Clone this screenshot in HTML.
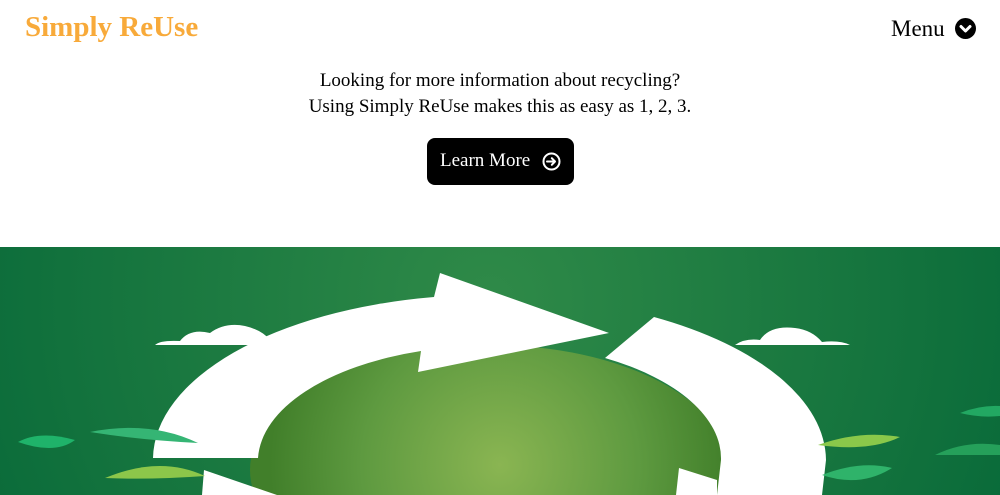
<!DOCTYPE html>
<html><head><style>
html,body{margin:0;width:1000px;height:495px;overflow:hidden}
body{background:#fff;font-family:"Liberation Serif",serif;position:relative}
.logo{position:absolute;left:25px;top:11px;font-size:29px;font-weight:bold;color:#f8aa3a}
.menu{position:absolute;left:891px;top:16px;font-size:23px;color:#000}
.mi{position:absolute;left:955px;top:18px;width:21px;height:21px;border-radius:50%;background:#000}
.txt{position:absolute;left:0;width:1000px;text-align:center;font-size:19px;color:#000}
.btn{position:absolute;left:427px;top:138px;width:147px;height:47px;border-radius:8px;background:#000;color:#fff;font-size:19px}
.btn span{position:absolute;left:13px;top:12px}
svg.hero{position:absolute;left:0;top:247px;display:block}
</style></head><body>
<div class="logo">Simply ReUse</div>
<div class="menu">Menu</div>
<div class="mi"><svg width="21" height="21"><path d="M6 8.5 L10.5 13 L15 8.5" stroke="#fff" stroke-width="3" fill="none" stroke-linecap="round" stroke-linejoin="round"/></svg></div>
<div class="txt" style="top:70px">Looking for more information about recycling?</div>
<div class="txt" style="top:96px">Using Simply ReUse makes this as easy as 1, 2, 3.</div>
<div class="btn"><span>Learn More</span>
<svg style="position:absolute;left:115px;top:14px" width="19" height="19"><circle cx="9.5" cy="9.5" r="8" stroke="#fff" stroke-width="2" fill="none"/><path d="M5 9.5H13M9.8 6.2L13 9.5L9.8 12.8" stroke="#fff" stroke-width="2" fill="none" stroke-linecap="round" stroke-linejoin="round"/></svg></div>
<svg class="hero" width="1000" height="248" viewBox="0 247 1000 248">
<defs>
<radialGradient id="bg" cx="490" cy="300" r="620" gradientUnits="userSpaceOnUse"><stop offset="0" stop-color="#2f8a48"/><stop offset="1" stop-color="#056738"/></radialGradient>
<radialGradient id="in" cx="500" cy="465" r="230" gradientUnits="userSpaceOnUse"><stop offset="0" stop-color="#8ab552"/><stop offset="0.6" stop-color="#5e9a40"/><stop offset="1" stop-color="#417f2a"/></radialGradient>
</defs>
<rect x="0" y="247" width="1000" height="248" fill="url(#bg)"/>
<ellipse cx="490" cy="470" rx="240" ry="125" fill="url(#in)"/>
<g fill="#fff">
<path d="M155 345 Q160 340 180 341 Q190 328 210 333 Q225 322 245 326 Q262 330 270 340 L330 345 Z"/>
<path d="M735 345 Q745 338 760 340 Q770 325 795 328 Q812 330 822 342 Q840 340 850 345Z"/>
<path d="M153 458 A337 165 0 0 1 434 297 L440 273 L609 333 L418 372 L421 351 A232 116 0 0 0 258 458 Z"/>
<path d="M654 317 A337 165 0 0 1 826 460 L822 495 L717 495 L721 460 A232 116 0 0 0 605 358 Z"/>
<path d="M204 470 L277 495 L202 495Z"/>
<path d="M679 468 L717 480 L717 495 L676 495Z"/>
</g>
<g>
<path d="M18 442 Q40 430 75 440 Q55 455 18 442Z" fill="#1fb36a"/>
<path d="M90 432 Q150 420 198 443 Q140 440 90 432Z" fill="#35b574"/>
<path d="M105 478 Q160 455 205 476 Q150 480 105 478Z" fill="#8cc64a"/>
<path d="M818 445 Q860 430 900 437 Q870 452 818 445Z" fill="#8ac84a"/>
<path d="M822 475 Q860 460 892 468 Q860 488 822 475Z" fill="#2fb36a"/>
<path d="M935 455 Q965 440 1000 445 L1000 455Z" fill="#25a05a"/>
<path d="M960 413 Q980 405 1000 406 L1000 416 Q980 418 960 413Z" fill="#22a862"/>
</g>
</svg>
</body></html>
